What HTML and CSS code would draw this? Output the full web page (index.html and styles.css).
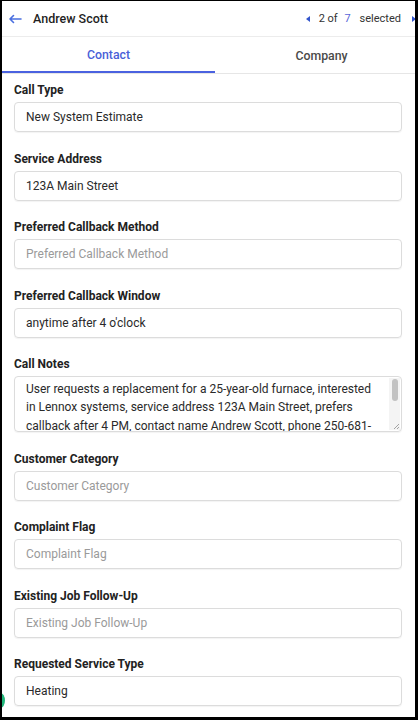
FILE: index.html
```html
<!DOCTYPE html>
<html>
<head>
<meta charset="utf-8">
<link rel="stylesheet" href="styles.css">
</head>
<body>
<div class="frame">
  <div class="header">
    <div class="back">
      <svg width="14" height="10" viewBox="0 0 14 10"><path d="M13 5H2M5.5 1.5L2 5l3.5 3.5" fill="none" stroke="#4a6fe0" stroke-width="1.6" stroke-linecap="round" stroke-linejoin="round"/></svg>
    </div>
    <div class="name">Andrew Scott</div>
    <div class="pager">
      <span class="tri tri-left"></span>
      <span class="count">2 of <span class="total">7</span></span>
      <span class="sel">selected</span>
      <span class="tri tri-right"></span>
    </div>
  </div>
  <div class="tabs">
    <div class="tab active">Contact</div>
    <div class="tab">Company</div>
  </div>
  <div class="form">
    <div class="field">
      <div class="label">Call Type</div>
      <div class="input">New System Estimate</div>
    </div>
    <div class="field">
      <div class="label">Service Address</div>
      <div class="input">123A Main Street</div>
    </div>
    <div class="field">
      <div class="label">Preferred Callback Method</div>
      <div class="input placeholder">Preferred Callback Method</div>
    </div>
    <div class="field">
      <div class="label">Preferred Callback Window</div>
      <div class="input">anytime after 4 o'clock</div>
    </div>
    <div class="field">
      <div class="label">Call Notes</div>
      <div class="textarea">
        <div class="ta-text">User requests a replacement for a 25-year-old furnace, interested<br>in Lennox systems, service address 123A Main Street, prefers<br>callback after 4 PM, contact name Andrew Scott, phone 250-681-</div>
        <div class="scroll"><div class="thumb"></div></div>
        <svg class="grip" width="8" height="8" viewBox="0 0 8 8"><path d="M7 2L2 7M7 5L5 7" stroke="#999" stroke-width="0.9"/></svg>
      </div>
    </div>
    <div class="field">
      <div class="label">Customer Category</div>
      <div class="input placeholder">Customer Category</div>
    </div>
    <div class="field">
      <div class="label">Complaint Flag</div>
      <div class="input placeholder">Complaint Flag</div>
    </div>
    <div class="field">
      <div class="label">Existing Job Follow-Up</div>
      <div class="input placeholder">Existing Job Follow-Up</div>
    </div>
    <div class="field">
      <div class="label">Requested Service Type</div>
      <div class="input">Heating</div>
    </div>
  </div>
  <div class="fab"></div>
</div>
</body>
</html>
```

FILE: styles.css
```css
html, body {
  margin: 0;
  padding: 0;
  background: #000;
}
body {
  width: 418px;
  height: 720px;
  font-family: Roboto, "Noto Sans", sans-serif;
}
.frame {
  position: relative;
  margin: 1px 3px 0 2px;
  width: 413px;
  height: 716px;
  background: #fff;
  overflow: hidden;
}
.header {
  width: 427px;
  height: 35px;
  display: flex;
  align-items: center;
  border-bottom: 1px solid #ececec;
}
.back {
  width: 31px;
  display: flex;
  justify-content: flex-start;
  padding-left: 6px;
  box-sizing: border-box;
}
.back svg { display: block; }
.name {
  font-size: 12.5px;
  color: #1f1f1f;
  font-weight: 500;
  flex: 1;
}
.pager {
  display: flex;
  align-items: center;
  font-size: 11px;
  color: #333;
  padding-right: 13px;
}
.tri {
  width: 0;
  height: 0;
  border-top: 3.5px solid transparent;
  border-bottom: 3.5px solid transparent;
}
.tri-left {
  border-right: 4px solid #3355cc;
  margin-right: 9px;
}
.tri-right {
  border-left: 4px solid #3355cc;
  margin-left: 11px;
}
.count { margin-right: 9px; }
.total { color: #5865d8; margin-left: 4px; }
.tabs {
  width: 427px;
  height: 36px;
  display: flex;
  border-bottom: 1px solid #e6e6e6;
}
.tab {
  flex: 0 0 213px;
  display: flex;
  align-items: center;
  justify-content: center;
  font-size: 12.3px;
  font-weight: 500;
  color: #4a4a4a;
  box-sizing: border-box;
  padding-top: 1px;
}
.tab.active {
  color: #4a5fd8;
  border-bottom: 2px solid #4a62e0;
}
.form {
  padding: 8px 13px 0 12px;
  display: flex;
  flex-direction: column;
  gap: 18.5px;
}
.field {
  display: flex;
  flex-direction: column;
  gap: 4px;
}
.label {
  font-size: 12px;
  font-weight: 700;
  color: #222;
  line-height: 16px;
}
.input {
  height: 30px;
  box-sizing: border-box;
  border: 1px solid #dcdcdc;
  border-radius: 4px;
  box-shadow: 0 1px 1px rgba(0,0,0,0.05);
  padding: 0 11px;
  display: flex;
  align-items: center;
  font-size: 12px;
  color: #2a2a2a;
}
.input.placeholder { color: #9a9a9a; }
.textarea {
  position: relative;
  height: 56px;
  box-sizing: border-box;
  border: 1px solid #dcdcdc;
  border-radius: 4px;
  box-shadow: 0 1px 1px rgba(0,0,0,0.05);
  overflow: hidden;
}
.ta-text {
  padding: 3px 14px 0 11px;
  font-size: 12px;
  line-height: 18.3px;
  color: #2a2a2a;
  white-space: nowrap;
}
.scroll {
  position: absolute;
  top: 1px;
  right: 1px;
  width: 11px;
  height: 52px;
  background: #f4f4f4;
}
.thumb {
  margin: 1px auto 0;
  width: 6px;
  height: 22px;
  border-radius: 3px;
  background: #c2c2c2;
}
.grip {
  position: absolute;
  right: 1px;
  bottom: 1px;
}
.fab {
  position: absolute;
  left: -6px;
  top: 692px;
  width: 9px;
  height: 15px;
  border-radius: 50%;
  background: #1fb57a;
}
```
